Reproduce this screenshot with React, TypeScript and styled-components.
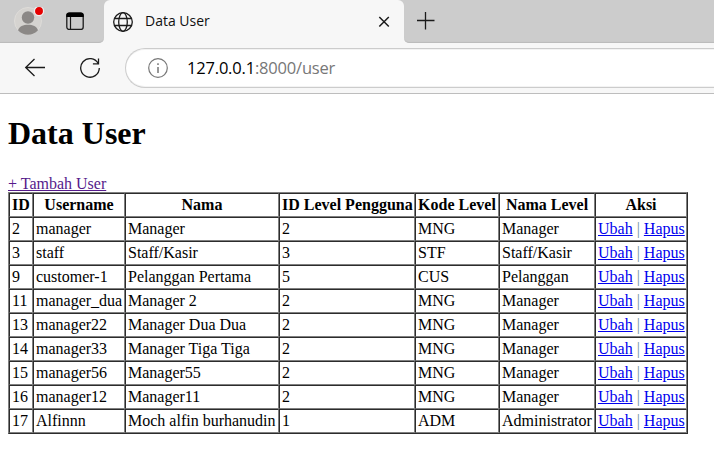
import React from "react";
import styled, { createGlobalStyle } from "styled-components";

const GlobalStyle = createGlobalStyle`
  html, body { margin: 0; padding: 0; background: #fff; overflow: hidden; }
`;

const Window = styled.div`
  width: 714px;
  height: 460px;
  background: #fff;
  color: #000;
  font: 16px/18px "Liberation Serif", "Times New Roman", serif;
`;

const TabStrip = styled.header`
  display: flex;
  height: 43px;
  background: #f7f7f7;
`;

const StripArea = styled.div<{ $side: "left" | "right" }>`
  box-sizing: border-box;
  display: flex;
  height: 43px;
  background: #ccc;
  box-shadow: inset 0 -2px 1px -1px #bbb;
  ${(p) =>
    p.$side === "left"
      ? "width: 104px; padding: 7px 0 0 14px; gap: 20px; border-bottom-right-radius: 5px;"
      : "flex: 1; padding: 11px 0 0 12px; border-bottom-left-radius: 5px;"}
`;

const TabBacking = styled.div`
  width: 300px;
  height: 43px;
  background: linear-gradient(#ccc 0 10px, #f7f7f7 10px);
`;

const Tab = styled.div`
  box-sizing: border-box;
  display: flex;
  align-items: flex-start;
  height: 43px;
  padding: 12px 12px 0 9px;
  border-radius: 6px 6px 0 0;
  background: #f7f7f7;
`;

const TabTitle = styled.span`
  flex: 1;
  margin: -1px 0 0 12px;
  color: #111;
  font: 14px/20px "Open Sans", sans-serif;
  letter-spacing: 0;
`;

const Toolbar = styled.nav`
  box-sizing: border-box;
  display: flex;
  height: 51px;
  padding: 5px 0 0 24px;
  background: #f7f7f7;
  border-bottom: 1px solid #bdbdbd;
`;

const NavIcon = styled.span<{ $gap: number }>`
  display: block;
  width: 22px;
  height: 22px;
  margin: 9px ${(p) => p.$gap}px 0 0;
`;

const AddressBar = styled.div`
  box-sizing: border-box;
  display: flex;
  flex: 1;
  height: 40px;
  padding: 9px 0 0 21px;
  background: #fff;
  border: 1px solid #ccc;
  border-right: 0;
  border-radius: 20px 0 0 20px;
  box-shadow: inset 0 1px #f3f3f3, inset 0 -1px #f3f3f3;
`;

const Url = styled.span`
  margin-left: 18px;
  color: #777;
  font: 16.500px/20px "Open Sans", sans-serif;
  letter-spacing: -0.19px;
  white-space: nowrap;
`;

const Host = styled.span`
  color: #000;
`;

const Icon = styled.svg`
  display: block;
  flex: none;
  fill: none;
  stroke: #1b1b1b;
`;

const Content = styled.main`
  padding: 0 8px;
`;

const Heading = styled.h1`
  margin: 0;
  padding: 21px 0 22px;
  font-size: 32px;
  line-height: 37px;
`;

const Actions = styled.div`
  height: 18px;
  line-height: 20px;
`;

const Link = styled.a<{ $visited?: boolean }>`
  color: ${(p) => (p.$visited ? "#551a8b" : "#0000ee")};
  text-decoration: underline;
`;

const Divider = styled.span`
  color: #6f8f98;
`;

const Table = styled.table`
  table-layout: fixed;
  width: 680px;
  border: 1px outset gray;
  border-collapse: separate;
  border-spacing: 0;
`;

const Column = styled.col<{ $width: number }>`
  width: ${(p) => p.$width}px;
`;

const Cell = styled.td`
  box-sizing: border-box;
  height: 24px;
  padding: 2px;
  border: 1px inset gray;
  white-space: nowrap;
`;

const HeaderCell = styled(Cell).attrs({ as: "th" })`
  text-align: center;
  font-weight: bold;
`;

const widths = [24, 92, 154, 136, 84, 96, 92];
const headers = ["ID", "Username", "Nama", "ID Level Pengguna", "Kode Level", "Nama Level", "Aksi"];
const users = [
  ["2", "manager", "Manager", "2", "MNG", "Manager"],
  ["3", "staff", "Staff/Kasir", "3", "STF", "Staff/Kasir"],
  ["9", "customer-1", "Pelanggan Pertama", "5", "CUS", "Pelanggan"],
  ["11", "manager_dua", "Manager 2", "2", "MNG", "Manager"],
  ["13", "manager22", "Manager Dua Dua", "2", "MNG", "Manager"],
  ["14", "manager33", "Manager Tiga Tiga", "2", "MNG", "Manager"],
  ["15", "manager56", "Manager55", "2", "MNG", "Manager"],
  ["16", "manager12", "Manager11", "2", "MNG", "Manager"],
  ["17", "Alfinnn", "Moch alfin burhanudin", "1", "ADM", "Administrator"],
];

const Avatar = () => (
  <Icon width="32" height="32" viewBox="0 0 32 32" stroke="none">
    <circle cx="14" cy="14" r="13.5" fill="#d5d3d0" stroke="#dedcd9" />
    <circle cx="14" cy="10.5" r="6.2" fill="#8b8886" stroke="none" />
    <path d="M4 23.300c1.300-4 5.200-5.600 10-5.600s8.700 1.600 10 5.600c-2.500 3-6 4.400-10 4.400S6.500 26.300 4 23.300z" fill="#8b8886" stroke="none" />
    <circle cx="25" cy="4" r="4.600" fill="#e60000" stroke="#eee" strokeWidth="1.300" />
  </Icon>
);

const Workspaces = () => (
  <Icon width="20" height="24" viewBox="0 0 20 24">
    <rect x=".8" y="6.200" width="16.400" height="16.200" rx="2.500" strokeWidth="1.300" />
    <path d="M.3 10V8.500a3 3 0 0 1 3-3h11.400a3 3 0 0 1 3 3V10z" fill="#000" stroke="none" />
    <path d="M4.500 10v12" strokeWidth="1.200" />
  </Icon>
);

const Globe = () => (
  <Icon width="20" height="20" viewBox="0 0 20 20" strokeWidth="1.300">
    <circle cx="10" cy="10" r="9.300" />
    <ellipse cx="10" cy="10" rx="4.300" ry="9.300" />
    <path d="M1.500 6.500h17M1.500 13.500h17" />
  </Icon>
);

export default function App() {
  return (
    <Window>
      <GlobalStyle />
      <TabStrip>
        <StripArea $side="left">
          <Avatar />
          <Workspaces />
        </StripArea>
        <TabBacking>
          <Tab>
            <Globe />
            <TabTitle>Data User</TabTitle>
            <Icon width="16" height="20" viewBox="0 0 16 20" strokeWidth="1.500">
              <path d="M3.300 5l9.500 9.500M12.800 5l-9.500 9.500" />
            </Icon>
          </Tab>
        </TabBacking>
        <StripArea $side="right">
          <Icon width="20" height="20" viewBox="0 0 20 20" strokeWidth="1.300">
            <path d="M1 9.500h17.500M9.500 1v17.500" />
          </Icon>
        </StripArea>
      </TabStrip>
      <Toolbar>
        <NavIcon $gap={33}>
          <Icon width="22" height="22" viewBox="0 0 22 22" strokeWidth="1.300">
            <path d="M21 10.500H1.800M10.500 2L1.700 10.500l8.800 8.500" />
          </Icon>
        </NavIcon>
        <NavIcon $gap={24}>
          <Icon width="22" height="22" viewBox="0 0 22 22" strokeWidth="1.300">
            <path d="M19.200 6.500A9.300 9.300 0 1 0 20.300 11M19.500 1.500v5.300h-5.600" />
          </Icon>
        </NavIcon>
        <AddressBar>
          <Icon width="22" height="22" viewBox="0 0 22 22">
            <circle cx="11" cy="10" r="9.300" stroke="#777" strokeWidth="1.200" />
            <path d="M11 9v6M11 5.300v1.700" stroke="#777" strokeWidth="1.500" />
          </Icon>
          <Url>
            <Host>127.0.0.1</Host>:8000/user
          </Url>
        </AddressBar>
      </Toolbar>
      <Content>
        <Heading>Data User</Heading>
        <Actions>
          <Link $visited>+ Tambah User</Link>
        </Actions>
        <Table>
          <colgroup>
            {widths.map((w, i) => (
              <Column key={i} $width={w} />
            ))}
          </colgroup>
          <thead>
            <tr>
              {headers.map((h) => (
                <HeaderCell key={h}>{h}</HeaderCell>
              ))}
            </tr>
          </thead>
          <tbody>
            {users.map((user) => (
              <tr key={user[0]}>
                {user.map((value, i) => (
                  <Cell key={i}>{value}</Cell>
                ))}
                <Cell>
                  <Link>Ubah</Link> <Divider>|</Divider> <Link>Hapus</Link>
                </Cell>
              </tr>
            ))}
          </tbody>
        </Table>
      </Content>
    </Window>
  );
}
